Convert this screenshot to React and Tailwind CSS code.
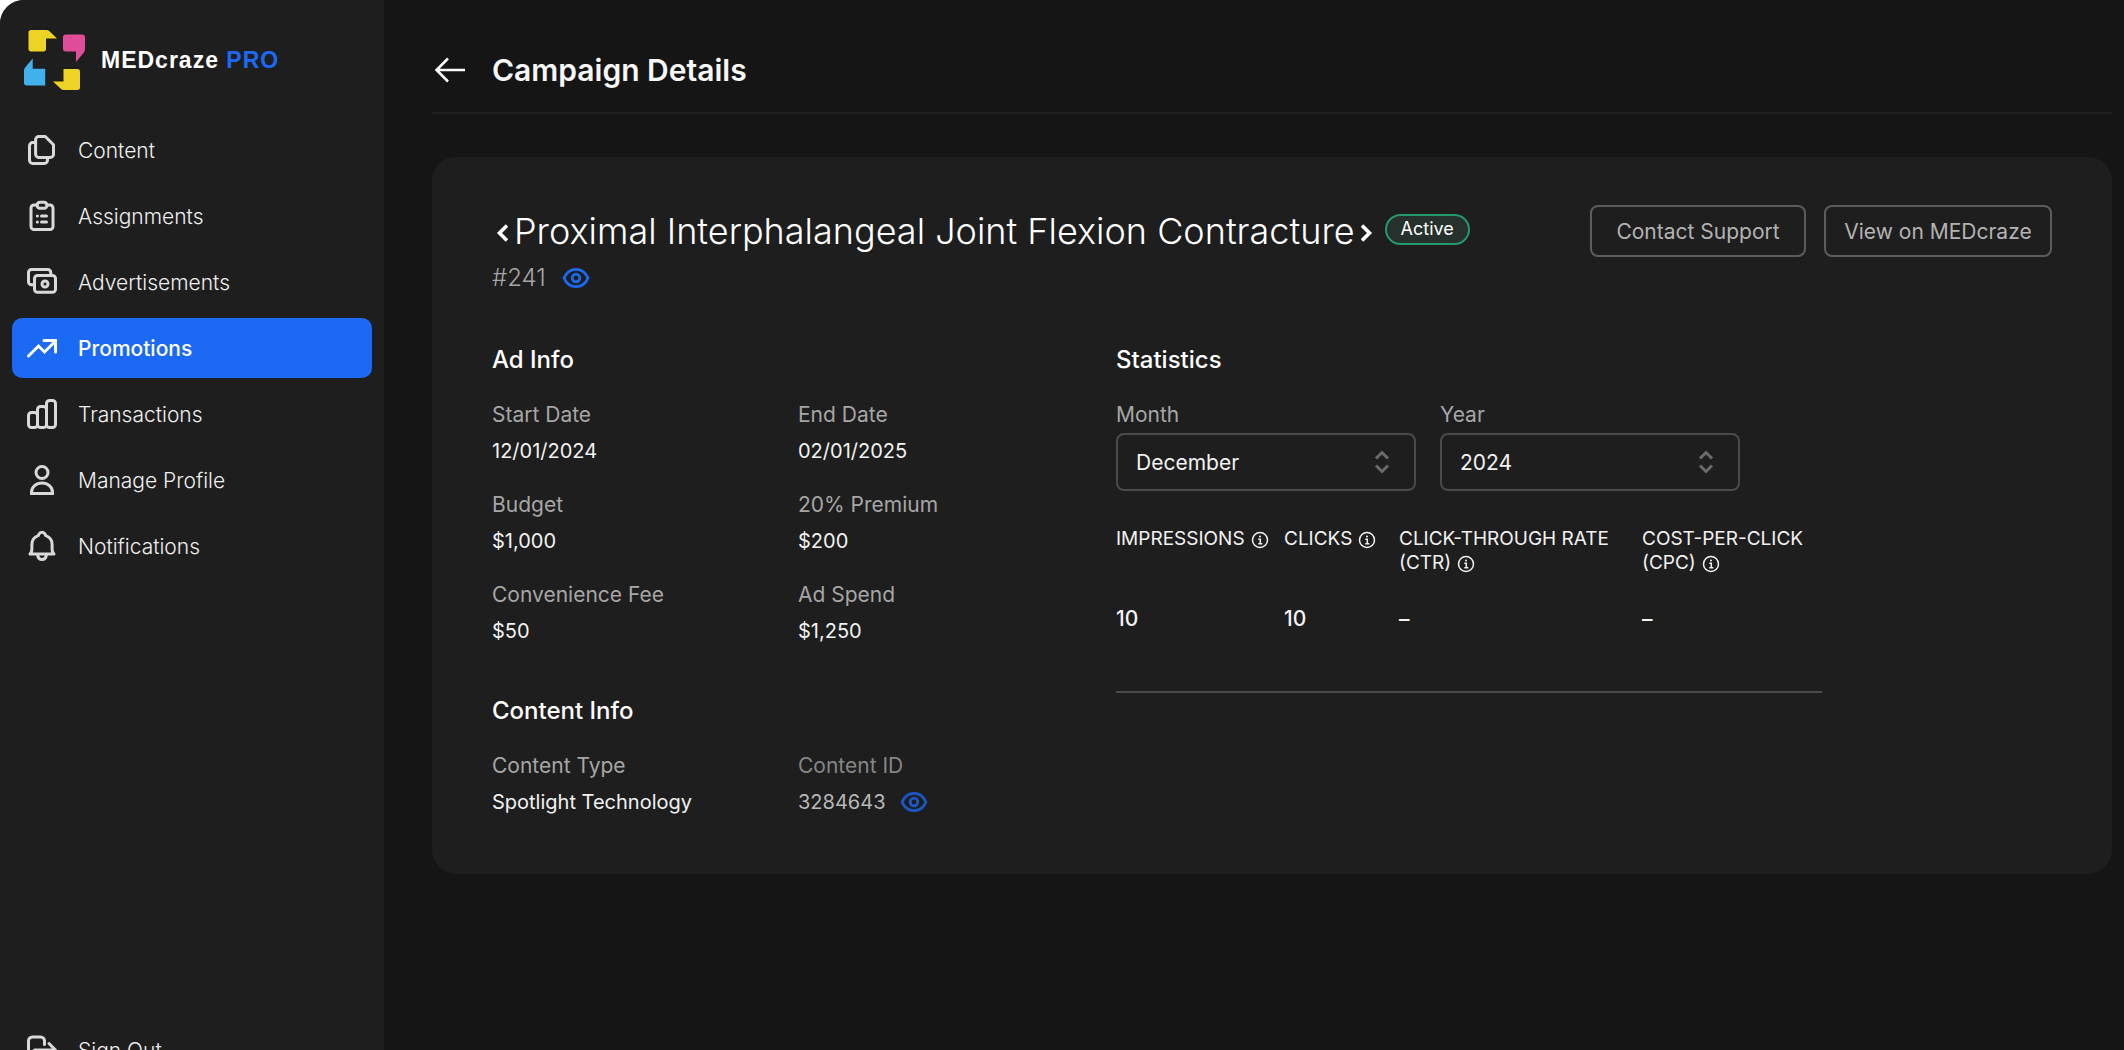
import React from "react";

const stroke = {
  fill: "none",
  stroke: "currentColor",
  strokeLinejoin: "round",
  strokeLinecap: "round",
};

function Icon({ children, weight = 3 }) {
  return (
    <svg viewBox="0 0 32 32" className="size-8 shrink-0" aria-hidden="true" {...stroke} strokeWidth={weight}>
      {children}
    </svg>
  );
}

const ContentIcon = () => (
  <Icon>
    <path d="M12.8 2.500h6.500l8.200 8.300v9.500a3.200 3.200 0 0 1-3.200 3.200H12.800a3.200 3.200 0 0 1-3.200-3.200V5.700a3.200 3.200 0 0 1 3.200-3.200Z" />
    <path d="M9.300 8.500H6.700a3.200 3.200 0 0 0-3.200 3.200v14.600a3.200 3.200 0 0 0 3.200 3.200h11.600a3.200 3.200 0 0 0 3.200-3.200v-2.300" />
  </Icon>
);

const AssignmentsIcon = () => (
  <Icon>
    <path d="M11 5H8a3 3 0 0 0-3 3v18.500a3 3 0 0 0 3 3h16a3 3 0 0 0 3-3V8a3 3 0 0 0-3-3h-3" />
    <rect x="11" y="2.300" width="10" height="6" rx="3" />
    <path d="M11.300 16h.1M15.500 16h5M11.300 22h.1M15.500 22h5" />
  </Icon>
);

const AdvertisementsIcon = () => (
  <Icon>
    <path d="M7.500 18.700H5.500a3 3 0 0 1-3-3V6.500a3 3 0 0 1 3-3h16.300a3 3 0 0 1 3 3v2.500" />
    <rect x="8.500" y="9.500" width="21" height="16.800" rx="3" />
    <circle cx="19" cy="18" r="3" />
  </Icon>
);

const PromotionsIcon = () => (
  <Icon>
    <path d="M2.500 24l10-10 6 6L29 9.500" strokeLinejoin="miter" />
    <path d="M18 8.500h11.500V20" strokeLinejoin="miter" />
  </Icon>
);

const TransactionsIcon = () => (
  <Icon>
    <rect x="2.500" y="14.500" width="9" height="15" rx="3" />
    <rect x="11.500" y="8.500" width="9" height="21" rx="3" />
    <rect x="20.500" y="2.500" width="9" height="27" rx="3" />
  </Icon>
);

const ProfileIcon = () => (
  <Icon>
    <circle cx="16" cy="8.500" r="6" />
    <path d="M5.500 29.500v-1.200c0-5.200 4.700-9.300 10.500-9.300s10.500 4.100 10.500 9.300v1.200Z" strokeLinejoin="miter" />
  </Icon>
);

const BellIcon = () => (
  <Icon>
    <path d="M4 24h24c-1.500-1.100-1.900-2.700-1.900-5.200v-4.300c0-4.300-2.300-7.300-6.200-8.800l-.8-1.500a3.500 3.500 0 0 0-6.200 0L12.100 5.700c-3.900 1.500-6.200 4.500-6.200 8.800v4.300C5.900 21.300 5.500 22.900 4 24Z" />
    <path d="M11.500 24.500c.4 3 2 5 4.500 5s4.100-2 4.500-5" />
  </Icon>
);

const SignOutIcon = () => (
  <Icon>
    <path d="M18.500 10.500V7a4 4 0 0 0-4-4H6.500a4 4 0 0 0-4 4v18a4 4 0 0 0 4 4h8a4 4 0 0 0 4-4v-3.500" />
    <path d="M8.500 16h20.500M23 9.500L29.500 16 23 22.500" />
  </Icon>
);

const BackIcon = () => (
  <Icon weight={2.5}>
    <path d="M2 16h29M14 4.500L2.500 16 14 27.500" strokeLinecap="butt" strokeLinejoin="miter" />
  </Icon>
);

const EyeIcon = () => (
  <svg viewBox="0 0 28 22" className="h-[22px] w-7" fill="none" stroke="currentColor" strokeWidth="2.800" aria-hidden="true">
    <path d="M2 11c2.500-5.800 6.600-8.700 12-8.700S23.500 5.200 26 11c-2.500 5.800-6.600 8.700-12 8.700S4.500 16.800 2 11Z" strokeLinejoin="round" />
    <circle cx="14" cy="11" r="3.800" />
  </svg>
);

const InfoIcon = () => (
  <svg viewBox="0 0 18 18" className="size-[18px]" fill="none" stroke="currentColor" strokeWidth="1.500" aria-hidden="true">
    <circle cx="9" cy="9" r="7.500" />
    <path d="M7.300 8.300H9.300v4.500M7.300 12.800h4" />
    <circle cx="9" cy="5.500" r="1" fill="currentColor" stroke="none" />
  </svg>
);

const TitleMark = ({ d }) => (
  <svg viewBox="0 0 12 18" className="mt-[3px] h-[18px] w-3 shrink-0" fill="none" stroke="currentColor" strokeWidth="3.600" aria-hidden="true">
    <path d={d} />
  </svg>
);

function Logo() {
  return (
    <svg viewBox="0 0 62 62" className="size-[62px]" aria-hidden="true">
      <path d="M7 1h15c1.500 0 2.500.5 3.500 1.300L33 9.500H22V20c0 1.500-1 2.500-2.500 2.500H7c-1.500 0-2.500-1-2.500-2.500V3.500C4.500 2 5.500 1 7 1Z" fill="#ecd326" />
      <path d="M41.500 5.500h17c1.500 0 2.500 1 2.500 2.500v12c0 1.500-.3 2.500-1.300 3.700L52 33V22.500H41.500c-1.500 0-2.500-1-2.500-2.500V8c0-1.500 1-2.500 2.500-2.500Z" fill="#e14c9b" />
      <path d="M8.700 29.500v10.300h12.500v16.700H2.500c-1.500 0-2.500-1-2.500-2.500V42c0-1.500.3-2.500 1.300-3.700Z" fill="#42b0ea" />
      <path d="M39.500 40H53.500c1.500 0 2.500 1 2.500 2.500v16c0 1.500-1 2.500-2.500 2.500H40.500c-1.500 0-2.500-.3-3.700-1.300L29 52.500h10.500Z" fill="#ecd326" />
    </svg>
  );
}

const nav = [
  ["Content", ContentIcon],
  ["Assignments", AssignmentsIcon],
  ["Advertisements", AdvertisementsIcon],
  ["Promotions", PromotionsIcon],
  ["Transactions", TransactionsIcon],
  ["Manage Profile", ProfileIcon],
  ["Notifications", BellIcon],
];

function NavItem({ label, Glyph, active }) {
  return (
    <a
      href="#"
      aria-current={active ? "page" : undefined}
      className={`flex h-[60px] items-center gap-5 rounded-[10px] px-[14px] text-[21px] ${
        active ? "bg-[#1c69f3] font-medium text-white" : "font-light text-[#f0f0f0]"
      }`}
    >
      <span className={active ? "text-white" : "text-[#d9d9d9]"}>
        <Glyph />
      </span>
      <span className="pt-0.5">{label}</span>
    </a>
  );
}

function Sidebar() {
  return (
    <aside className="flex w-96 shrink-0 flex-col rounded-tl-3xl bg-[#1e1e1e]">
      <div className="flex h-[91px] items-end gap-[15px] pl-6">
        <Logo />
        <p className="mb-[14px] font-['Liberation_Sans'] text-[23px] font-bold tracking-[1px] whitespace-nowrap text-white">
          MEDcraze <span className="text-[#1c69f3]">PRO</span>
        </p>
      </div>
      <nav className="mt-[29px] flex flex-col gap-1.5 px-3" aria-label="Main">
        {nav.map(([label, Glyph]) => (
          <NavItem key={label} label={label} Glyph={Glyph} active={label === "Promotions"} />
        ))}
      </nav>
      <div className="mt-[444px] px-3">
        <NavItem label="Sign Out" Glyph={SignOutIcon} />
      </div>
    </aside>
  );
}

function Field({ label, children }) {
  return (
    <div>
      <dt className="text-[21px] leading-9 text-[#a6a6a6]">{label}</dt>
      <dd className="text-xl leading-9 text-[#f2f2f2]">{children}</dd>
    </div>
  );
}

function SelectField({ id, label, options }) {
  return (
    <div className="w-[300px]">
      <label htmlFor={id} className="block text-[21px] leading-9 text-[#a6a6a6]">
        {label}
      </label>
      <div className="relative">
        <select
          id={id}
          className="h-[58px] w-full appearance-none rounded-lg border-2 border-[#4a4a4a] bg-[#1e1e1e] px-[18px] pt-0.5 text-[21px] text-[#f2f2f2]"
        >
          {options.map((o) => (
            <option key={o}>{o}</option>
          ))}
        </select>
        <svg viewBox="0 0 16 24" className="pointer-events-none absolute top-[17px] right-[26px] h-6 w-4" fill="none" stroke="#6b6b6b" strokeWidth="3" aria-hidden="true">
          <path d="M2 8.500l6-6 6 6M2 15.500l6 6 6-6" />
        </svg>
      </div>
    </div>
  );
}

const stats = [
  { head: "IMPRESSIONS", value: "10", width: "w-[168px]" },
  { head: "CLICKS", value: "10", width: "w-[115px]" },
  { head: "CLICK-THROUGH RATE", sub: "(CTR)", value: "–", width: "w-[243px]" },
  { head: "COST-PER-CLICK", sub: "(CPC)", value: "–", width: "w-[180px]" },
];

function Info({ label }) {
  return (
    <button type="button" aria-label={`About ${label}`} className="ml-1.5 inline-block h-[18px] align-[-4px]">
      <InfoIcon />
    </button>
  );
}

function StatsTable() {
  return (
    <table className="mt-9 w-[706px] table-fixed border-b-2 border-[#4a4a4a] text-left">
      <thead>
        <tr className="align-top">
          {stats.map((s) => (
            <th key={s.head} className={`${s.width} pb-[26px] text-[19px] leading-6 font-normal whitespace-nowrap text-[#f2f2f2]`}>
              {s.head}
              {s.sub && <br />}
              {s.sub}
              <Info label={s.head} />
            </th>
          ))}
        </tr>
      </thead>
      <tbody>
        <tr>
          {stats.map((s) => (
            <td key={s.head} className="pb-[54px] text-[21px] leading-9 font-medium text-[#f2f2f2]">
              {s.value}
            </td>
          ))}
        </tr>
      </tbody>
    </table>
  );
}

function ActionButton({ children, width }) {
  return (
    <button type="button" className={`${width} h-[52px] rounded-lg border-2 border-[#5c5c5c] pt-0.5 text-[21px] whitespace-nowrap text-[#b3b3b3]`}>
      {children}
    </button>
  );
}

const months = ["December", "January", "February"];
const years = ["2024", "2025"];

export default function App() {
  return (
    <div className="h-screen overflow-hidden bg-white font-['Inter',sans-serif]">
      <div className="flex min-h-full rounded-tl-3xl bg-[#151515]">
        <Sidebar />
        <main className="min-w-0 flex-1 pr-3 pl-12">
          <header className="flex h-[114px] items-center gap-[26px] border-b-2 border-[#202020] pt-7">
            <a href="#" aria-label="Back" className="ml-0.5 text-white">
              <BackIcon />
            </a>
            <h1 className="text-[30px] font-semibold text-[#f7f7f7]">Campaign Details</h1>
          </header>

          <section className="mt-[43px] rounded-3xl bg-[#1e1e1e] px-[60px] pt-12 pb-[54px]">
            <div className="flex items-start justify-between">
              <div>
                <div className="flex items-center text-white">
                  <h2 className="flex h-[52px] items-center gap-1.5 pl-1 text-[36px] font-light whitespace-nowrap">
                    <TitleMark d="M11 1.500L3.500 9l7.500 7.500" />
                    Proximal Interphalangeal Joint Flexion Contracture
                    <TitleMark d="M1 1.500L8.500 9 1 16.500" />
                  </h2>
                  <span className="mb-1 ml-3 flex h-[31px] items-center rounded-full border-2 border-[#24996b] bg-[#26302d] px-[14px] text-lg">
                    Active
                  </span>
                </div>
                <div className="flex h-[42px] items-center gap-4 text-2xl font-light text-[#a6a6a6]">
                  #241
                  <button type="button" aria-label="View campaign" className="text-[#1c69f3]">
                    <EyeIcon />
                  </button>
                </div>
              </div>
              <div className="flex gap-[18px]">
                <ActionButton width="w-[216px]">Contact Support</ActionButton>
                <ActionButton width="w-[228px]">View on MEDcraze</ActionButton>
              </div>
            </div>

            <div className="mt-[43px] grid grid-cols-[624px_1fr]">
              <div>
                <h3 className="text-2xl leading-9 font-medium text-white">Ad Info</h3>
                <dl className="mt-[19px] grid grid-cols-[306px_1fr] gap-y-[18px]">
                  <Field label="Start Date">12/01/2024</Field>
                  <Field label="End Date">02/01/2025</Field>
                  <Field label="Budget">$1,000</Field>
                  <Field label="20% Premium">$200</Field>
                  <Field label="Convenience Fee">$50</Field>
                  <Field label="Ad Spend">$1,250</Field>
                </dl>
                <h3 className="mt-11 text-2xl leading-9 font-medium text-white">Content Info</h3>
                <dl className="mt-[19px] grid grid-cols-[306px_1fr]">
                  <Field label="Content Type">Spotlight Technology</Field>
                  <div>
                    <dt className="text-[21px] leading-9 text-[#868686]">Content ID</dt>
                    <dd className="flex items-center gap-[14px] text-xl leading-9 text-[#b8b8b8]">
                      3284643
                      <button type="button" aria-label="View content" className="text-[#1a58c8]">
                        <EyeIcon />
                      </button>
                    </dd>
                  </div>
                </dl>
              </div>
              <div>
                <h3 className="text-2xl leading-9 font-medium text-white">Statistics</h3>
                <div className="mt-[19px] flex gap-6">
                  <SelectField id="month" label="Month" options={months} />
                  <SelectField id="year" label="Year" options={years} />
                </div>
                <StatsTable />
              </div>
            </div>
          </section>
        </main>
      </div>
    </div>
  );
}
